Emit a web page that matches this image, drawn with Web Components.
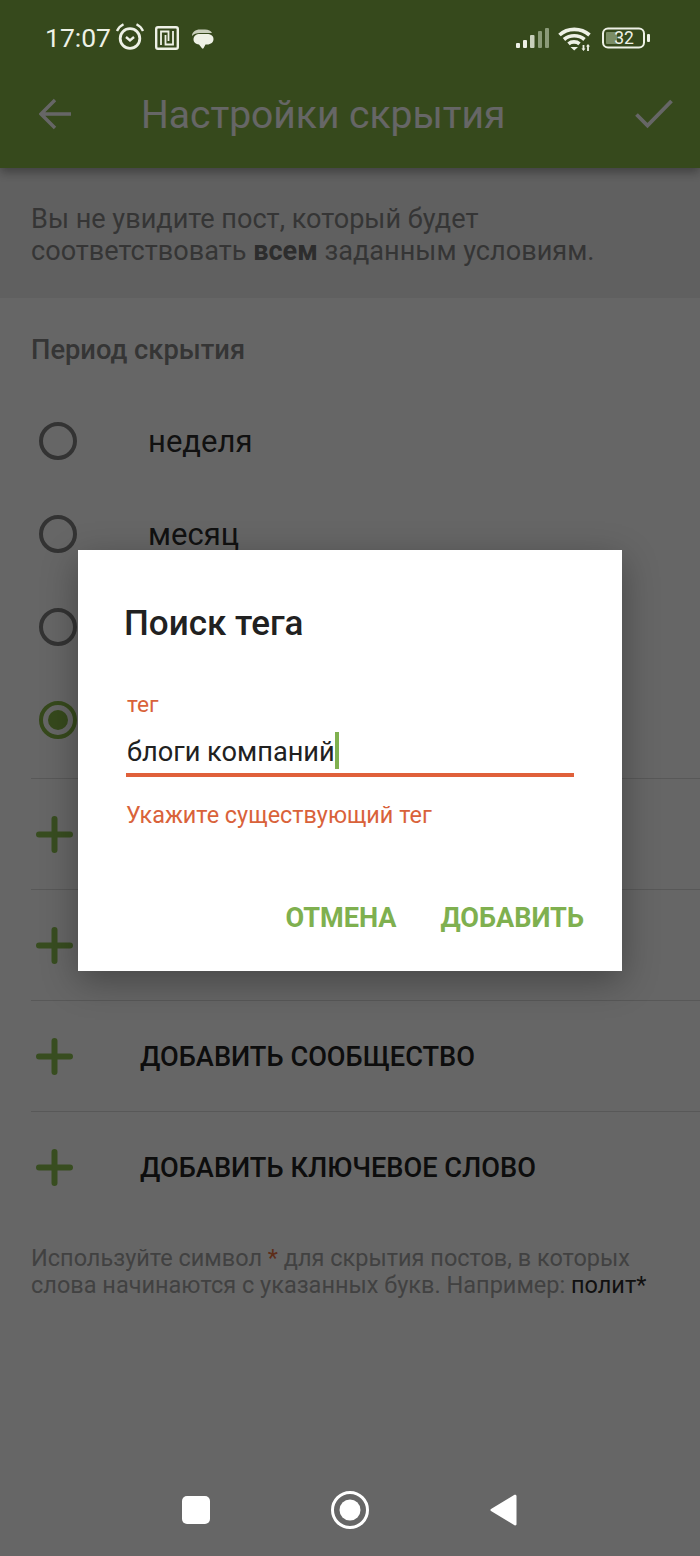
<!DOCTYPE html>
<html lang="ru">
<head>
<meta charset="utf-8">
<title>Настройки скрытия</title>
<style>
    html, body { margin: 0; padding: 0; }
    body { width: 700px; height: 1556px; overflow: hidden; font-family: Roboto, "Liberation Sans", sans-serif; background: #fff; }
</style>
</head>
<body>
<hide-settings></hide-settings>

<script>
//status bar, sits above the scrim so its colours are written out dimmed already
class StatusBar extends HTMLElement {
    constructor(){
        super()
        this.attachShadow({mode: "open"}).innerHTML = `
            <style>
                :host{ display:flex; align-items:center; height:76px; box-sizing:border-box; padding:0 0 0 45px; background:#36491c; color:#eef1e6; position:relative; z-index:3; }
                .time{ font-size:26.500px; line-height:30px; width:70px; }
                svg{ display:block; flex:none; }
                .right{ margin-left:auto; margin-right:50px; display:flex; align-items:center; }
                .alarm{ margin-top:-4px; }
                .nfc{ margin-left:10px; }
                .chat{ margin-left:13px; margin-top:2px; }
                .wifi{ margin-left:9px; margin-top:1px; }
                .batt{ margin-left:10px; position:relative; width:48px; height:22px; }
                .batt span{ position:absolute; left:9px; top:0; width:26px; font-size:17.500px; line-height:22px; text-align:center; }
            </style>
            <span class="time">17:07</span>
            <svg class="alarm" width="30" height="27" viewBox="0 0 30 27" fill="none" stroke="currentColor">
                <circle cx="15" cy="15.500" r="9.800" stroke-width="2.800"/>
                <path d="M11 14l4 3.500 4-3.500" stroke-width="2.400"/>
                <path d="M2 8C3.500 4.500 5.500 2.700 8.500 1.200M28 8C26.500 4.500 24.500 2.700 21.500 1.200" stroke-width="2.400"/>
            </svg>
            <svg class="nfc" width="24" height="24" viewBox="0 0 24 24" fill="none" stroke="currentColor">
                <rect x="1.200" y="1.200" width="21.600" height="21.600" rx="1.800" stroke-width="2.400"/>
                <path d="M6 19V5.500h7.500V15M18 5v13.500h-7.500V9" stroke-width="1.800"/>
            </svg>
            <svg class="chat" width="22" height="20" viewBox="0 0 22 20">
                <path d="M0 7C0 3 3.500 .5 8 .5h5c3.500 0 6 1.200 7 3.500H8C4.500 4 1.500 5 0 7z" fill="#c9cfbc"/>
                <path d="M1.500 10.500C1.500 7 4 5 8 5h7c3.500 0 6.500 1.800 6.500 5s-2.500 5.500-6.500 5.500h-1.500l-2 3.700c-.4.600-1 .600-1.500.1l-3-3.900C4 15.200 1.500 13.500 1.500 10.500z" fill="currentColor"/>
            </svg>
            <div class="right">
                <svg width="33" height="20" viewBox="0 0 33 20">
                    <rect x="0" y="15" width="4" height="5" rx="1" fill="currentColor"/>
                    <rect x="7" y="12" width="4" height="8" rx="1" fill="currentColor"/>
                    <rect x="14" y="7" width="4.500" height="13" rx="1" fill="#c9cfbc"/>
                    <rect x="22" y="3" width="4" height="17" rx="1" fill="#8b9a78"/>
                    <rect x="29" y="0" width="4" height="20" rx="1" fill="#8b9a78"/>
                </svg>
                <svg class="wifi" width="34" height="24" viewBox="0 0 34 24" fill="none" stroke="currentColor" stroke-width="3.700">
                    <path d="M1.500 8C9.500 .5 23 .5 31.500 8"/>
                    <path d="M6 12.500C12 7.500 20.500 7.500 26.500 12.500"/>
                    <path d="M10.500 16.800c3-2.500 8-2.500 11 0"/>
                    <path d="M12.500 20l3.700 3.500L20 20z" fill="currentColor" stroke="none"/>
                    <path d="M25.500 18v4M30 19v5" stroke-width="1.800"/>
                    <path d="M23.500 21.500l2 2.500 2-2.500zM28 19.500l2-2.500 2 2.500z" fill="currentColor" stroke="none"/>
                </svg>
                <div class="batt">
                    <svg width="48" height="22" viewBox="0 0 48 22">
                        <rect x="1" y="1.500" width="41" height="19" rx="5" fill="none" stroke="currentColor" stroke-width="2"/>
                        <rect x="4" y="5" width="11" height="12" rx="1" fill="#7b8d66"/>
                        <rect x="45" y="7" width="3" height="8" rx="1" fill="currentColor"/>
                    </svg>
                    <span>32</span>
                </div>
            </div>
        `
    }
}
customElements.define('status-bar', StatusBar)

class AppBar extends HTMLElement {
    constructor(){
        super()
        this.attachShadow({mode: "open"}).innerHTML = `
            <style>
                :host{ display:flex; align-items:center; height:92px; box-sizing:border-box; padding-bottom:16px; background:#87b646; color:#fff; box-shadow:0 4px 10px rgba(0,0,0,.35); position:relative; }
                svg{ display:block; flex:none; }
                .back{ margin-left:39px; }
                .title{ margin-left:70px; font-size:39px; line-height:44px; flex:1; position:relative; top:1px; }
                .done{ margin-right:27px; }
            </style>
            <svg class="back" width="32" height="32" viewBox="0 0 32 32" fill="none" stroke="currentColor" stroke-width="3.400">
                <path d="M32 16H2M16 2L2 16l14 14"/>
            </svg>
            <div class="title">Настройки скрытия</div>
            <svg class="done" width="38" height="30" viewBox="0 0 38 30" fill="none" stroke="currentColor" stroke-width="3.800">
                <path d="M1.500 15.500L12.500 26.500 36.500 2"/>
            </svg>
        `
    }
}
customElements.define('app-bar', AppBar)

class RadioRow extends HTMLElement {
    constructor(){
        super()
        const checked = this.hasAttribute('checked')
        this.attachShadow({mode: "open"}).innerHTML = `
            <style>
                :host{ display:flex; align-items:center; height:93px; padding-left:39px; }
                .ring{ width:38px; height:38px; box-sizing:border-box; border:4px solid ${checked ? '#87b646' : '#808080'}; border-radius:50%; display:flex; align-items:center; justify-content:center; }
                .dot{ width:20px; height:20px; border-radius:50%; background:#87b646; }
                .label{ margin-left:71px; font-size:31px; line-height:36px; color:#2b2b2b; position:relative; top:1px; }
            </style>
            <div class="ring">${checked ? '<div class="dot"></div>' : ''}</div>
            <div class="label"><slot></slot></div>
        `
    }
}
customElements.define('radio-row', RadioRow)

class AddRow extends HTMLElement {
    constructor(){
        super()
        this.attachShadow({mode: "open"}).innerHTML = `
            <style>
                :host{ display:flex; align-items:center; height:110px; margin-left:31px; border-top:1px solid #dcdcdc; position:relative; }
                svg{ display:block; flex:none; margin-left:5px; }
                .label{ margin-left:67px; font-size:27.200px; line-height:32px; font-weight:500; color:#222; position:relative; top:1px; }
            </style>
            <svg width="37" height="37" viewBox="0 0 37 37" fill="none" stroke="#8cc050" stroke-width="6" stroke-linecap="round">
                <path d="M18.500 3v31M3 18.500h31"/>
            </svg>
            <div class="label"><slot></slot></div>
        `
    }
}
customElements.define('add-row', AddRow)

class NavBar extends HTMLElement {
    constructor(){
        super()
        this.attachShadow({mode: "open"}).innerHTML = `
            <style>
                :host{ display:flex; justify-content:space-between; align-items:center; position:absolute; left:182px; bottom:27px; width:335px; height:38px; z-index:3; }
                .square{ width:28px; height:28px; border-radius:5px; background:#fff; }
                svg{ display:block; }
            </style>
            <div class="square"></div>
            <svg width="38" height="38" viewBox="0 0 38 38">
                <circle cx="19" cy="19" r="17.500" fill="none" stroke="#fff" stroke-width="3"/>
                <circle cx="19" cy="19" r="10.500" fill="#fff"/>
            </svg>
            <svg width="27" height="32" viewBox="0 0 27 32">
                <path d="M24.500 .8L1 15c-.8.500-.8 1.500 0 2l23.500 14.200c1 .5 2 0 2-1V2c0-1-1-1.700-2-1.200z" fill="#fff"/>
            </svg>
        `
    }
}
customElements.define('nav-bar', NavBar)

class TagDialog extends HTMLElement {
    constructor(){
        super()
        this.attachShadow({mode: "open"}).innerHTML = `
            <style>
                :host{ display:flex; flex-direction:column; position:absolute; left:78px; top:550px; width:544px; height:421px; box-sizing:border-box; padding:0 37px 0 47px; background:#fff; box-shadow:0 10px 34px rgba(0,0,0,.32); z-index:2; }
                h2{ margin:51px 0 0 -1px; font-size:35px; line-height:46px; font-weight:500; color:#212121; }
                .hint{ margin:45px 0 0 2px; font-size:22.700px; line-height:26px; color:#d9623a; }
                .field{ margin:14px 11px 0 1px; height:37px; border-bottom:4px solid #e0603a; display:flex; align-items:center; font-size:27.200px; color:#212121; padding-bottom:4px; }
                .field span:first-child{ position:relative; top:1px; margin-left:1px; }
                .caret{ width:4px; height:37px; background:#7fb04f; }
                .error{ margin:24px 0 0 1px; font-size:23.400px; line-height:28px; color:#d9623a; }
                .actions{ margin:auto 1px 35px 0; display:flex; justify-content:flex-end; gap:44px; font-size:27.100px; line-height:36px; font-weight:700; color:#7fb04f; }
            </style>
            <h2>Поиск тега</h2>
            <div class="hint">тег</div>
            <div class="field"><span>блоги компаний</span><span class="caret"></span></div>
            <div class="error">Укажите существующий тег</div>
            <div class="actions"><span>ОТМЕНА</span><span>ДОБАВИТЬ</span></div>
        `
    }
}
customElements.define('tag-dialog', TagDialog)

class HideSettings extends HTMLElement {
    constructor(){
        super()
        this.attachShadow({mode: "open"}).innerHTML = `
            <style>
                :host{ display:block; position:relative; width:700px; height:1556px; overflow:hidden; background:#fff; }
                .intro{ height:130px; box-sizing:border-box; padding:35px 31px 0; background:#f0f0f0; color:#868686; font-size:27.100px; line-height:32px; }
                .intro div, .note div{ white-space:nowrap; }
                .intro b{ color:#707070; font-weight:700; }
                h3{ margin:0; padding:36px 31px 0; font-size:27.300px; line-height:32px; font-weight:500; color:#848484; }
                .radios{ margin-top:28px; margin-bottom:12px; }
                .note{ margin:0; padding:23px 31px 0; font-size:23.500px; line-height:27px; color:#a4a4a4; }
                .note i{ font-style:normal; color:#e8703f; }
                .note em{ font-style:normal; color:#2b2b2b; }
                .scrim{ position:absolute; inset:0; background:rgba(0,0,0,.6); z-index:1; }
            </style>
            <status-bar></status-bar>
            <app-bar></app-bar>
            <div class="intro">
                <div>Вы не увидите пост, который будет</div>
                <div>соответствовать <b>всем</b> заданным условиям.</div>
            </div>
            <h3>Период скрытия</h3>
            <div class="radios">
                <radio-row>неделя</radio-row>
                <radio-row>месяц</radio-row>
                <radio-row></radio-row>
                <radio-row checked></radio-row>
            </div>
            <add-row></add-row>
            <add-row></add-row>
            <add-row>ДОБАВИТЬ СООБЩЕСТВО</add-row>
            <add-row>ДОБАВИТЬ КЛЮЧЕВОЕ СЛОВО</add-row>
            <div class="note">
                <div>Используйте символ <i>*</i> для скрытия постов, в которых</div>
                <div>слова начинаются с указанных букв. Например: <em>полит*</em></div>
            </div>
            <div class="scrim"></div>
            <tag-dialog></tag-dialog>
            <nav-bar></nav-bar>
        `
    }
}
customElements.define('hide-settings', HideSettings)
</script>
</body>
</html>
